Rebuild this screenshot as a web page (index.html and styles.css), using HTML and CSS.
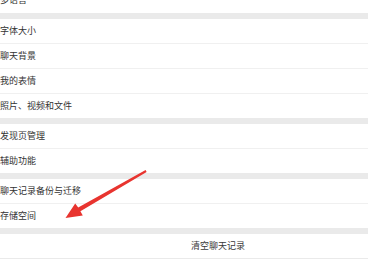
FILE: index.html
```html
<!DOCTYPE html>
<html lang="zh">
<head>
<meta charset="utf-8">
<link rel="stylesheet" href="styles.css">
</head>
<body>
<div class="page">
  <div class="group">
    <div class="row top">多语言</div>
  </div>
  <div class="group">
    <div class="row">字体大小</div>
    <div class="row">聊天背景</div>
    <div class="row">我的表情</div>
    <div class="row">照片、视频和文件</div>
  </div>
  <div class="group">
    <div class="row">发现页管理</div>
    <div class="row">辅助功能</div>
  </div>
  <div class="group">
    <div class="row">聊天记录备份与迁移</div>
    <div class="row">存储空间</div>
  </div>
  <div class="group">
    <div class="row clear">清空聊天记录</div>
  </div>
  <svg class="arrow" width="368" height="259" viewBox="0 0 368 259">
    <polygon points="145.6,170.1 78.2,207.6 75.2,203.4 65.5,218 82.8,215.6 80.4,211.3 146.6,171.9" fill="#e8342f"/>
  </svg>
</div>
</body>
</html>
```
FILE: styles.css
```css
html, body {
  margin: 0;
  padding: 0;
  background: #eaeaea;
}
.page {
  position: relative;
  width: 368px;
  height: 259px;
  overflow: hidden;
  font-family: "Noto Sans CJK SC", "Noto Sans", sans-serif;
  font-size: 9px;
  color: #333;
  display: flex;
  flex-direction: column;
  gap: 6px;
}
.group {
  background: #fff;
  display: flex;
  flex-direction: column;
}
.row {
  height: 24px;
  line-height: 24px;
  border-bottom: 1px solid #f0f0f0;
  white-space: nowrap;
}
.row:last-child {
  border-bottom: none;
}
.top {
  height: 13px;
  line-height: 0px;
}
.clear {
  padding-left: 191px;
  color: #3a3a3a;
}
.arrow {
  position: absolute;
  left: 0;
  top: 0;
}
```
